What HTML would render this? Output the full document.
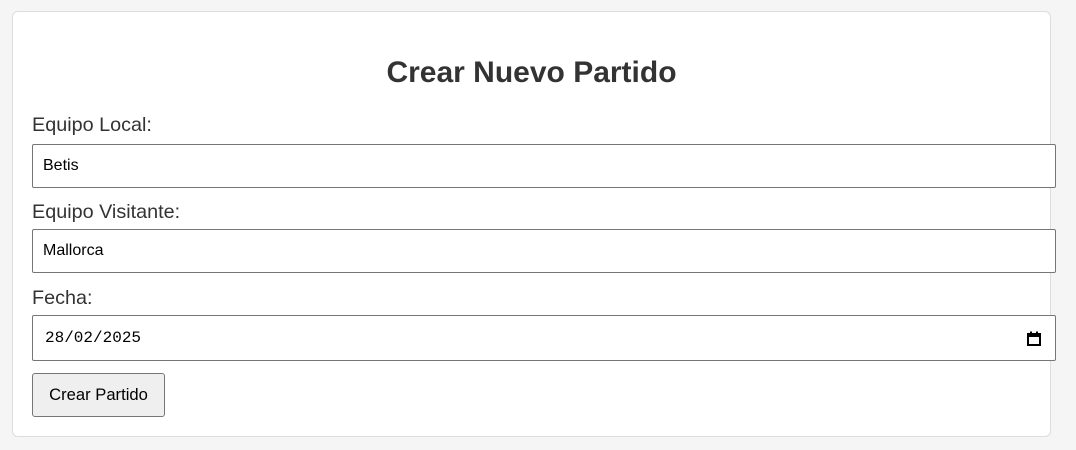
<!DOCTYPE html>
<html><head><style>
body{margin:0;background:#f5f5f5;font-family:"Liberation Sans",Arial,sans-serif;width:1076px;height:450px;overflow:hidden;position:relative}
.card{position:absolute;left:12px;top:11px;width:1037px;height:424px;background:#fff;border:1px solid #ddd;border-radius:6px}
h2{position:absolute;left:12px;width:1039px;top:55px;margin:0;text-align:center;font-size:30px;font-weight:bold;color:#333;line-height:36px}
.lbl{position:absolute;left:32px;font-size:19.8px;color:#333;line-height:22px}
.inp{position:absolute;left:32px;border:1px solid #767676;background:#fff;box-sizing:border-box;width:1024px;font-size:16px;color:#000;padding-left:10px;border-radius:2px}
.btn{position:absolute;left:32px;top:373px;width:133px;height:44px;box-sizing:border-box;border:1px solid #767676;background:#efefef;border-radius:3px;font-size:16.6px;text-align:center;line-height:42px;color:#000}
</style></head><body>
<div class="card"></div>
<h2>Crear Nuevo Partido</h2>
<div class="lbl" style="top:114px">Equipo Local:</div>
<div class="inp" style="top:144px;height:44px;line-height:42px">Betis</div>
<div class="lbl" style="top:201px">Equipo Visitante:</div>
<div class="inp" style="top:229px;height:44px;line-height:42px">Mallorca</div>
<div class="lbl" style="top:287px">Fecha:</div>
<div class="inp" style="top:315px;height:46px;line-height:44px;font-family:'Liberation Mono',monospace;font-size:16px;padding-left:12px">28/02/2025
<svg style="position:absolute;right:14px;top:15px" width="14" height="15" viewBox="0 0 14 15"><rect x="1" y="3" width="12" height="11" fill="none" stroke="#000" stroke-width="2"/><rect x="1" y="3" width="12" height="3" fill="#000"/><rect x="3" y="0.5" width="2" height="3" fill="#000"/><rect x="9" y="0.5" width="2" height="3" fill="#000"/></svg></div>
<div class="btn">Crear Partido</div>
</body></html>
